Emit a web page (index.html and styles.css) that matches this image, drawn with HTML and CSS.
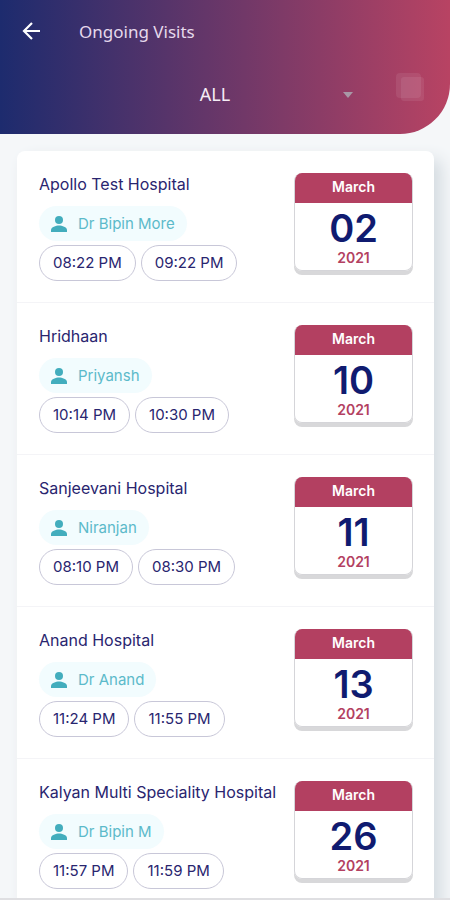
FILE: index.html
```html
<!DOCTYPE html>
<html lang="en">
<head>
<meta charset="utf-8">
<meta name="viewport" content="width=device-width, initial-scale=1">
<title>Ongoing Visits</title>
<link rel="stylesheet" href="styles.css">
</head>
<body>
<svg class="defs" aria-hidden="true">
  <symbol id="person" viewBox="0 0 18 18">
    <circle cx="9" cy="5" r="4"/>
    <path d="M1 17v-2c0-3 5-4.500 8-4.500s8 1.500 8 4.500v2z"/>
  </symbol>
</svg>
<div class="app">
  <header class="header">
    <div class="bar">
      <button class="back" aria-label="Back">
        <svg viewBox="0 0 20 20" width="20" height="20"><path d="M19 10H3M11 2L3 10l8 8" fill="none" stroke="currentColor" stroke-width="2.200"/></svg>
      </button>
      <h1 class="heading">Ongoing Visits</h1>
    </div>
    <div class="filter">
      <div class="picker">
        <select class="select" aria-label="Filter visits"><option>ALL</option></select>
        <svg class="caret" viewBox="0 0 10 6" width="10" height="6"><path d="M0 0h10L5 6z"/></svg>
      </div>
      <button class="copy" aria-label="Copy">
        <svg viewBox="0 0 30 30" width="30" height="30"><rect x="1" y="1" width="25" height="25" rx="4"/><rect x="6" y="5" width="23" height="24" rx="3"/></svg>
      </button>
    </div>
  </header>
  <main class="content">
    <ul class="list">
      <li class="visit">
        <div class="info">
          <h2 class="name">Apollo Test Hospital</h2>
          <span class="doctor"><svg class="person"><use href="#person"/></svg>Dr Bipin More</span>
          <div class="times"><time class="time">08:22 PM</time><time class="time">09:22 PM</time></div>
        </div>
        <div class="date"><span class="month">March</span><span class="day">02</span><span class="year">2021</span></div>
      </li>
      <li class="visit">
        <div class="info">
          <h2 class="name">Hridhaan</h2>
          <span class="doctor"><svg class="person"><use href="#person"/></svg>Priyansh</span>
          <div class="times"><time class="time">10:14 PM</time><time class="time">10:30 PM</time></div>
        </div>
        <div class="date"><span class="month">March</span><span class="day">10</span><span class="year">2021</span></div>
      </li>
      <li class="visit">
        <div class="info">
          <h2 class="name">Sanjeevani Hospital</h2>
          <span class="doctor"><svg class="person"><use href="#person"/></svg>Niranjan</span>
          <div class="times"><time class="time">08:10 PM</time><time class="time">08:30 PM</time></div>
        </div>
        <div class="date"><span class="month">March</span><span class="day">11</span><span class="year">2021</span></div>
      </li>
      <li class="visit">
        <div class="info">
          <h2 class="name">Anand Hospital</h2>
          <span class="doctor"><svg class="person"><use href="#person"/></svg>Dr Anand</span>
          <div class="times"><time class="time">11:24 PM</time><time class="time">11:55 PM</time></div>
        </div>
        <div class="date"><span class="month">March</span><span class="day">13</span><span class="year">2021</span></div>
      </li>
      <li class="visit">
        <div class="info">
          <h2 class="name">Kalyan Multi Speciality Hospital</h2>
          <span class="doctor"><svg class="person"><use href="#person"/></svg>Dr Bipin M</span>
          <div class="times"><time class="time">11:57 PM</time><time class="time">11:59 PM</time></div>
        </div>
        <div class="date"><span class="month">March</span><span class="day">26</span><span class="year">2021</span></div>
      </li>
    </ul>
  </main>
</div>
</body>
</html>
```
FILE: styles.css
```css
* { box-sizing: border-box; }

body {
  margin: 0;
  font-family: Inter, "Liberation Sans", sans-serif;
  color: #29256f;
  background: #f5f7f9;
}

button {
  padding: 0;
  border: 0;
  background: none;
  color: inherit;
}

.defs { display: none; }

.app {
  display: flex;
  flex-direction: column;
  height: 100vh;
  border-bottom: 2px solid #dfdfe2;
}

.header {
  flex: none;
  padding: 15px 25px 24px 21px;
  color: #fff;
  background: linear-gradient(90deg, #1d2b6e, #b84363);
  border-bottom-right-radius: 50px;
}

.bar {
  display: flex;
  align-items: center;
  gap: 38px;
  height: 32px;
}

.back {
  display: flex;
  width: 20px;
}

.heading {
  margin: 0;
  font-family: "Noto Sans", sans-serif;
  font-size: 17px;
  font-weight: 400;
  color: #e6d9ec;
}

.filter {
  display: flex;
  align-items: flex-start;
  justify-content: space-between;
  gap: 24px;
  margin: 25px 0 0 40px;
}

.picker {
  position: relative;
  flex: 1;
}

.select {
  display: block;
  width: 100%;
  height: 38px;
  padding: 6px 18px 0 16px;
  border: 0;
  appearance: none;
  background: none;
  font: 18px "Noto Sans", sans-serif;
  color: #f5edf5;
  text-align: center;
  text-align-last: center;
}

.caret {
  position: absolute;
  right: 18px;
  top: 20px;
  fill: #a898a6;
  pointer-events: none;
}

.copy {
  display: flex;
  fill: #fff;
  fill-opacity: 0.080;
}

.content {
  flex: 1;
  min-height: 0;
  padding: 17px 16px 0 17px;
  overflow: auto;
  scrollbar-width: none;
}

.list {
  margin: 0;
  padding: 0;
  list-style: none;
  background: #fff;
  border-radius: 8px;
  box-shadow: 8px 8px 16px #d5dce1;
}

.visit {
  display: flex;
  justify-content: space-between;
  height: 152px;
  padding: 21px 21px 0 22px;
  border-bottom: 1px solid #f4f4f7;
}

.info {
  display: flex;
  flex-direction: column;
  align-items: flex-start;
}

.name {
  margin: 0 0 10px;
  font-size: 16px;
  line-height: 24px;
  font-weight: 400;
  white-space: nowrap;
}

.doctor {
  display: flex;
  align-items: center;
  gap: 10px;
  height: 35px;
  margin-bottom: 4px;
  padding: 0 12px 0 11px;
  border-radius: 18px;
  background: #f2fcfe;
  color: #5cbaca;
  font-size: 15px;
}

.person {
  width: 18px;
  height: 18px;
  fill: #43adbd;
}

.times {
  display: flex;
  gap: 5px;
}

.time {
  padding: 0 13px;
  border: 1px solid #c8c7d8;
  border-radius: 18px;
  font-size: 15px;
  line-height: 34px;
}

.date {
  display: flex;
  flex-direction: column;
  align-items: center;
  flex: none;
  width: 119px;
  height: 98px;
  margin-top: 1px;
  border: 1px solid #d5d5d9;
  border-top: 0;
  border-radius: 8px;
  box-shadow: 0 4px 0 #d8d8da;
  overflow: hidden;
}

.month {
  align-self: stretch;
  padding-bottom: 2px;
  background: #b34061;
  color: #fff;
  font-size: 14px;
  line-height: 28px;
  font-weight: 600;
  text-align: center;
}

.day {
  margin-top: 4px;
  color: #101b70;
  font-size: 38px;
  line-height: 42px;
  font-weight: 600;
}

.year {
  color: #b34061;
  font-size: 14px;
  line-height: 18px;
  font-weight: 600;
}
```
